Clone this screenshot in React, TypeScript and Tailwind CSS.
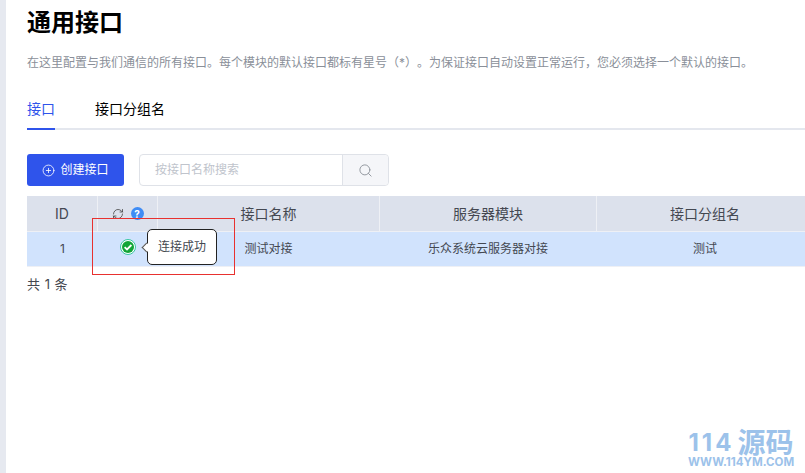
import { CirclePlus, Search, RefreshCw } from "lucide-react";

const font = "font-['Inter','Noto_Sans_CJK_SC',sans-serif]";

const columns = ["w-[222px]", "w-[217px]", "w-[217px]"];

export default function App() {
  return (
    <div className={`relative flex h-[473px] w-[805px] overflow-hidden bg-white ${font}`}>
      <div className="w-[6px] shrink-0 bg-[#e6e9f0]" />
      <div className="w-[830px] shrink-0 pl-[21px]">
        <h1 className="mt-[7px] h-[32px] text-[24px] leading-[32px] font-bold text-black">通用接口</h1>
        <p className="mt-[16px] h-[16px] w-[800px] text-[12px] leading-[16px] whitespace-nowrap text-[#8a8f99] [text-spacing-trim:space-all]">
          在这里配置与我们通信的所有接口。每个模块的默认接口都标有星号（*）。为保证接口自动设置正常运行，您必须选择一个默认的接口。
        </p>

        <div className="mt-[24px] flex h-[35px] w-[778px] border-b-2 border-[#e4e7ee]">
          <div className="-mb-[2px] h-[35px] w-[28px] border-b-2 border-[#2f54eb] pt-[4px] text-[14px] leading-[20px] text-[#2f54eb]">接口</div>
          <div className="ml-[40px] pt-[4px] text-[14px] leading-[20px] text-black">接口分组名</div>
        </div>

        <div className="mt-[24px] flex h-[32px]">
          <button className="flex w-[97px] items-center justify-center gap-[5px] rounded-[3px] bg-[#2f54eb] text-[12px] text-white">
            <CirclePlus size={13} strokeWidth={1.5} />
            创建接口
          </button>
          <div className="ml-[15px] flex w-[250px] rounded-[4px] border border-[#dfe2e8]">
            <div className="flex-1 pl-[15px] text-[12px] leading-[30px] text-[#c0c4cc]">按接口名称搜索</div>
            <div className="flex w-[46px] items-center justify-center rounded-r-[4px] border-l border-[#dfe2e8] bg-[#f5f6f9] text-[#8f949c]">
              <Search size={15} strokeWidth={1.5} />
            </div>
          </div>
        </div>

        <div className="mt-[10px] w-[787px] text-[12px] text-[#444851]">
          <div className="flex h-[36px] border-b border-[#eef0f5] bg-[#dce1ec] text-[14px] leading-[35px]">
            <div className="w-[71px] border-r border-[#eef0f5] text-center">ID</div>
            <div className="flex w-[60px] items-center justify-center gap-[7px] border-r border-[#eef0f5]">
              <RefreshCw size={12} strokeWidth={1.6} className="text-[#444]" />
              <span className="flex h-[13px] w-[13px] items-center justify-center rounded-full bg-[#3f8cf5] text-[10px] leading-none font-bold text-white">?</span>
            </div>
            {["接口名称", "服务器模块", "接口分组名"].map((name, i) => (
              <div key={name} className={`${columns[i]} border-r border-[#eef0f5] text-center`}>
                {name}
              </div>
            ))}
          </div>
          <div className="flex h-[35px] border-b border-[#eef0f5] bg-[#d1e3fd] leading-[33px]">
            <div className="w-[71px] text-center">1</div>
            <div className="flex w-[60px] items-center justify-center">
              <svg width="16" height="16" viewBox="0 0 16 16" className="mt-[-4px]">
                <circle cx="8" cy="8" r="7.5" fill="#fff" stroke="#37c6a0" />
                <circle cx="8" cy="8" r="6" fill="#12a537" />
                <path d="M4.6 8.1l2.4 2.3L11.4 6" fill="none" stroke="#fff" strokeWidth="1.8" />
              </svg>
            </div>
            {["测试对接", "乐众系统云服务器对接", "测试"].map((text, i) => (
              <div key={text} className={`${columns[i]} pr-[1px] text-center`}>
                {text}
              </div>
            ))}
          </div>
        </div>

        <div className="mt-[9px] text-[13px] leading-[16px] tracking-[0.5px] text-[#444851]">共 1 条</div>
      </div>

      <div className="absolute top-[229px] left-[147px] flex h-[36px] w-[70px] items-center justify-center rounded-[5px] border border-[#222] bg-white text-[12px] text-[#444851]">
        连接成功
      </div>
      <div className="absolute top-[244px] left-[143px] h-[7px] w-[7px] rotate-45 border-b border-l border-[#555] bg-white" />
      <div className="absolute top-[218px] left-[92px] h-[57px] w-[143px] border border-[#e8312f]" />

      <div className="absolute top-[431px] left-[686px] flex w-[110px] flex-col items-center text-[#9cc2ea]">
        <div className="flex h-[24px] items-center text-[28px] leading-[24px] font-bold whitespace-nowrap">
          <span className="mr-[3px] text-[24px] tracking-[3px]">114</span>
          <span>源码</span>
        </div>
        <div className="mt-[1px] text-[11.5px] leading-[12px] font-bold whitespace-nowrap">WWW.114YM.COM</div>
      </div>
    </div>
  );
}
